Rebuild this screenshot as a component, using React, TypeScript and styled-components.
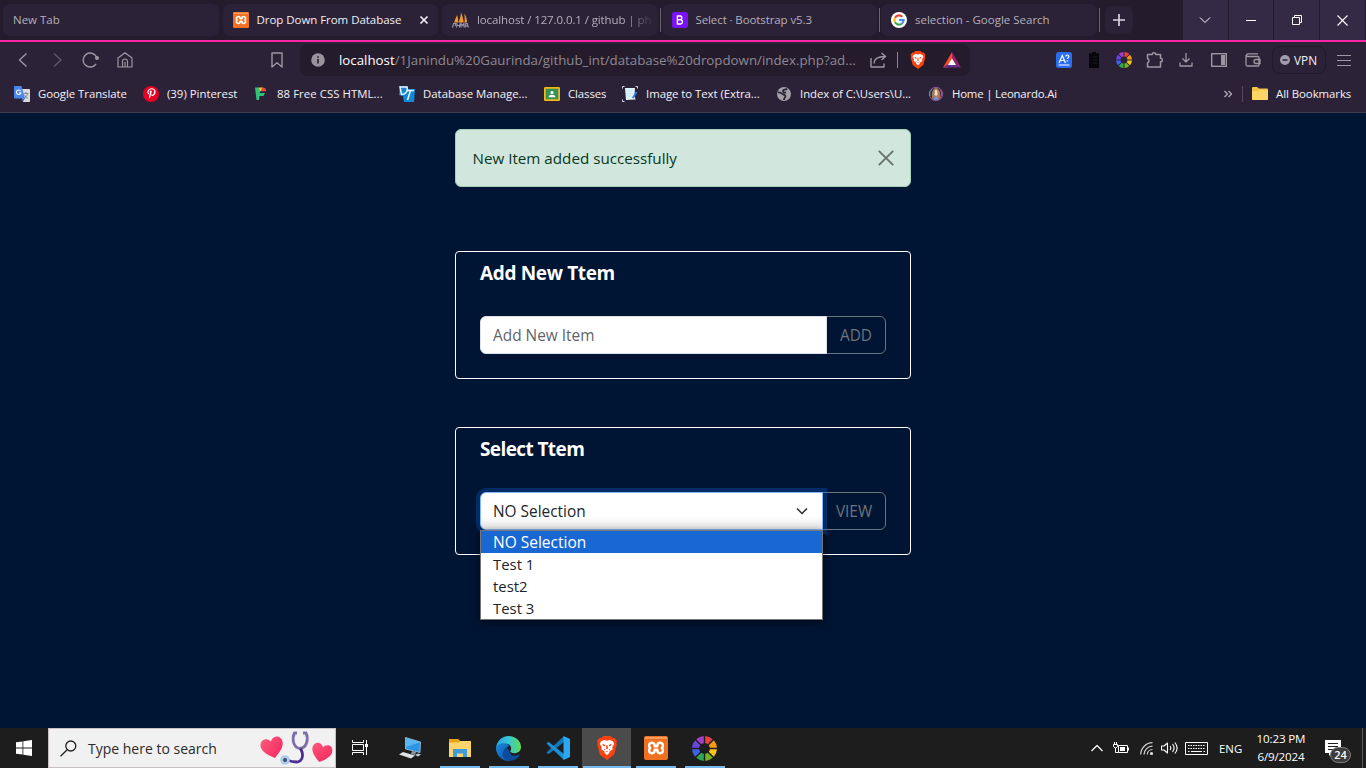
import React from "react";
import styled, { createGlobalStyle } from "styled-components";
import { FaPinterestP } from "react-icons/fa";

const Global = createGlobalStyle`
  * { box-sizing: border-box; }
  body {
    margin: 0;
    overflow: hidden;
    font-family: "Open Sans", "Noto Sans", sans-serif;
    background: #001433;
  }
  svg { display: block; flex: none; }
`;

const Screen = styled.div`
  width: 1366px;
  height: 768px;
  display: flex;
  flex-direction: column;
`;

/* ---------- browser chrome ---------- */

const TabStrip = styled.header`
  height: 42px;
  display: flex;
  background: #241b2c;
  border-bottom: 2px solid #fb26a7;
`;
const Tabs = styled.div`
  display: flex;
  width: 1098px;
  padding: 4px 0 4px 3px;
`;
const TabSlot = styled.div<{ $rule?: boolean }>`
  width: 219.5px;
  flex: none;
  display: flex;
  align-items: center;
  &::after {
    content: "";
    width: 1px;
    height: 24px;
    margin-left: 2px;
    background: ${(p) => (p.$rule ? "#6a6370" : "transparent")};
  }
`;
const Tab = styled.div<{ $active?: boolean }>`
  width: 215.5px;
  height: 32px;
  padding: 0 8px 1px 10px;
  display: flex;
  align-items: center;
  gap: 8px;
  border-radius: 7px;
  background: #2c2238;
  color: ${(p) => (p.$active ? "#f1eff4" : "#b4afba")};
  font-size: 11.5px;
`;
const TabTitle = styled.span<{ $fade?: boolean; $ls?: number }>`
  flex: 1;
  white-space: nowrap;
  letter-spacing: ${(p) => p.$ls ?? 0}px;
  ${(p) => p.$fade && "mask-image: linear-gradient(90deg, #000 84%, transparent 102%);"}
`;
const NewTab = styled.div`
  width: 28px;
  height: 28px;
  margin: 6px 50px 0 7px;
  border-radius: 7px;
  background: #2c2238;
  display: grid;
  place-items: center;
`;
const WinButton = styled.div`
  width: 45px;
  height: 40px;
  margin-right: 1px;
  background: #352a46;
  display: grid;
  place-items: center;
`;

const Toolbar = styled.div`
  height: 34px;
  display: flex;
  align-items: center;
  background: #2c2238;
  color: #9c96a1;
`;
const NavIcons = styled.div`
  width: 300px;
  display: flex;
  align-items: center;
  padding: 2px 0 0 15px;
`;
const Slot = styled.div<{ $w: number; $dim?: boolean }>`
  width: ${(p) => p.$w}px;
  flex: none;
  display: flex;
  opacity: ${(p) => (p.$dim ? 0.45 : 1)};
`;
const Address = styled.div`
  width: 670px;
  height: 32px;
  margin-top: 2px;
  padding: 0 9px 0 10px;
  display: flex;
  align-items: center;
  border-radius: 8px;
  background: #241b2c;
`;
const Url = styled.div`
  width: 531px;
  margin-left: 13px;
  white-space: nowrap;
  font-size: 13.3px;
  color: #8e8893;
  b { font-weight: 400; color: #fff; }
`;
const Rule = styled.i<{ $h: number; $m: string; $c?: string }>`
  width: 1px;
  height: ${(p) => p.$h}px;
  margin: ${(p) => p.$m};
  background: ${(p) => p.$c ?? "#8b8590"};
`;
const Extensions = styled.div`
  display: flex;
  align-items: center;
  padding: 2px 0 0 86px;
`;
const Vpn = styled.div`
  width: 54px;
  height: 28px;
  display: flex;
  align-items: center;
  gap: 4px;
  padding: 0 0 1px 7px;
  border: 1px solid #211829;
  border-radius: 8px;
  color: #f3f1f5;
  font-size: 11.8px;
`;

const BookmarkBar = styled.nav`
  height: 37px;
  display: flex;
  align-items: center;
  padding: 0 0 1px 14px;
  border-bottom: 1px solid #463c50;
  background: #2c2238;
  color: #f4f2f6;
  font-size: 11.4px;
`;
const Bookmark = styled.div<{ $w: number; $ls?: number }>`
  width: ${(p) => p.$w}px;
  flex: none;
  display: flex;
  align-items: center;
  gap: 8px;
  white-space: nowrap;
  letter-spacing: ${(p) => p.$ls ?? 0}px;
`;

/* ---------- page ---------- */

const Page = styled.main`
  height: 615px;
  background: #001433;
  padding-top: 16px;
  display: flex;
  flex-direction: column;
  align-items: center;
`;
const Alert = styled.div`
  width: 456px;
  height: 58px;
  padding: 0 16px 0 16.5px;
  display: flex;
  align-items: center;
  justify-content: space-between;
  border: 1px solid #a3cfbb;
  border-radius: 6px;
  background: #d1e7dd;
  color: #0a3622;
  font-size: 15.2px;
`;
const Card = styled.section<{ $mt: number }>`
  width: 456px;
  height: 128px;
  margin-top: ${(p) => p.$mt}px;
  padding: 9px 24px 0;
  border: 1px solid #fff;
  border-radius: 4px;
`;
const CardTitle = styled.h5<{ $ls: number }>`
  margin: 0 0 31px;
  font-size: 19px;
  line-height: 24px;
  font-weight: 700;
  letter-spacing: ${(p) => p.$ls}px;
  color: #fff;
`;
const Group = styled.div`
  position: relative;
  display: flex;
  height: 38px;
`;
const Field = styled.div<{ $focus?: boolean }>`
  position: relative;
  z-index: 1;
  flex: 1;
  display: flex;
  align-items: center;
  justify-content: space-between;
  padding: 0 12px;
  font-size: 15.4px;
  background: #fff;
  border: 1px solid ${(p) => (p.$focus ? "#86b7fe" : "#dee2e6")};
  border-radius: 6px 0 0 6px;
  color: ${(p) => (p.$focus ? "#212529" : "#5f6469")};
  ${(p) =>
    p.$focus &&
    "box-shadow: 0 0 0 4px rgba(13,110,253,.25); background: linear-gradient(#fff 65%, #e6e6e6);"}
`;
const OutlineButton = styled.button<{ $w: number }>`
  width: ${(p) => p.$w}px;
  margin-left: -1px;
  padding: 0;
  background: transparent;
  border: 1px solid #6c757d;
  border-radius: 0 6px 6px 0;
  font: 15.4px "Open Sans", sans-serif;
  color: #6c757d;
`;
const Options = styled.div`
  position: absolute;
  z-index: 2;
  left: 0;
  top: 38px;
  width: 343px;
  border: 1px solid #767676;
  background: #fff;
  box-shadow: 0 2px 8px rgba(0, 0, 0, 0.55);
`;
const Option = styled.div<{ $on?: boolean }>`
  height: 22px;
  padding-left: 12px;
  line-height: 22px;
  font-size: ${(p) => (p.$on ? 15.5 : 14.9)}px;
  background: ${(p) => (p.$on ? "#1967d2" : "#fff")};
  color: ${(p) => (p.$on ? "#fff" : "#212529")};
`;

/* ---------- taskbar ---------- */

const Taskbar = styled.footer`
  height: 40px;
  display: flex;
  background: #1d1d1d;
  color: #fff;
`;
const Start = styled.div`
  width: 48px;
  padding: 12px 0 0 16px;
`;
const Search = styled.div`
  width: 288px;
  height: 40px;
  display: flex;
  align-items: center;
  padding-left: 11px;
  border: 1px solid #c6bfc2;
  background: #f2f1f1;
  color: #2b2b2b;
  font-size: 14px;
`;
const SearchText = styled.span`
  width: 172px;
  margin-left: 11px;
`;
const TaskButton = styled.div<{ $w?: number; $open?: boolean; $active?: boolean }>`
  width: ${(p) => p.$w ?? 49}px;
  flex: none;
  display: flex;
  flex-direction: column;
  align-items: center;
  justify-content: space-between;
  padding-top: 8px;
  &::after {
    content: "";
    width: ${(p) => (p.$active ? 48 : 40)}px;
    height: 2px;
    background: ${(p) => (p.$open ? "#76b9ed" : "transparent")};
  }
  ${(p) => p.$active && "background: #4b4b4b;"}
`;
const Tray = styled.div`
  margin-left: auto;
  width: 276px;
  display: flex;
  align-items: center;
  font-size: 11.4px;
`;
const Clock = styled.div`
  width: 50px;
  margin-left: -1px;
  text-align: center;
  line-height: 18px;
  font-size: 11.6px;
  white-space: nowrap;
  letter-spacing: -0.15px;
`;
const Notice = styled.div`
  position: relative;
  width: 32px;
  margin-left: 19px;
`;
const Count = styled.span`
  position: absolute;
  left: 5px;
  top: 7px;
  width: 21px;
  height: 16px;
  border: 1px solid #7d7d7d;
  border-radius: 8px;
  background: #3c3c3c;
  font-size: 11px;
  font-weight: 600;
  line-height: 14px;
  text-align: center;
`;

/* ---------- icons ---------- */

const XamppMark = ({ size }: { size: number }) => (
  <svg width={size} height={size} viewBox="0 0 24 24">
    <rect width="24" height="24" rx="2" fill="#f07022" />
    <rect x="1" y="1" width="22" height="1.800" fill="#f9a266" />
    <path
      d="M8.200 6.800C5 6.800 4 10 6.200 12 4 14 5 17.200 8.200 17.200c2 0 2.500-1.600 2.500-3.400h2.600c0 1.800.5 3.400 2.500 3.400 3.200 0 4.200-3.200 2-5.200 2.200-2 1.200-5.200-2-5.200-2 0-2.500 1.600-2.500 3.400h-2.600c0-1.800-.5-3.400-2.500-3.400z"
      fill="none"
      stroke="#fff"
      strokeWidth="2.400"
      strokeLinejoin="round"
    />
  </svg>
);

const BraveMark = ({ w, h }: { w: number; h: number }) => (
  <svg width={w} height={h} viewBox="0 0 20 24">
    <path d="M4.500 2 6.500 0h7l2 2h2.200L20 5l-.7 2 .5 1.500-2.800 10.200L10 24l-7-5.300L.2 8.500.7 7 0 5l2.300-3z" fill="#fb4212" />
    <path d="M10 4.800 7.300 4 4 5.300 2.800 8l2 3.300-.5 2 3.500 2.500L7.500 17l2.500 2 2.500-2-.3-1.200 3.500-2.500-.5-2 2-3.300L16 5.300 12.700 4z" fill="#fff" />
    <path d="m5.400 7.800 3 1.200-.8 1.400-1.700-.8zm9.200 0-3 1.200.8 1.400 1.700-.8zM9.500 9h1l.5 3.500-1 .8-1-.8zM6.600 12.500l1.700 1-.6.800zm6.800 0-1.700 1 .6.800zM9 15.500l1-.5 1 .5-1 .7z" fill="#fb4212" />
  </svg>
);

const wheel = ["#e8403c", "#f59a11", "#f9c21a", "#6fb51f", "#2fa84f", "#3f62ea", "#6a45dd", "#a33ecb"];
const ColorWheel = ({ size }: { size: number }) => (
  <svg width={size} height={size} viewBox="-12 -12 24 24">
    {wheel.map((c, i) => (
      <path
        key={c}
        transform={`rotate(${i * 45 + 22.5})`}
        d="M-3.900 -11.350A12 12 0 0 1 3.900 -11.350L1.400 -5A5.200 5.200 0 0 0 -1.400 -5z"
        fill={c}
      />
    ))}
  </svg>
);

const GoogleG = () => (
  <svg width="16" height="16" viewBox="0 0 16 16">
    <circle cx="8" cy="8" r="8" fill="#fff" />
    <g fill="none" strokeWidth="2.200">
      <path d="M4 5.700A4.600 4.600 0 0 1 11.300 4.800" stroke="#ea4335" />
      <path d="M4 5.700a4.600 4.600 0 0 0 0 4.600" stroke="#fbbc05" />
      <path d="M4 10.300a4.600 4.600 0 0 0 7 1.200" stroke="#34a853" />
      <path d="M8.200 8h4.400a4.600 4.600 0 0 1-1.600 3.500" stroke="#4285f4" />
    </g>
  </svg>
);

const PmaMark = () => (
  <svg width="17" height="16" viewBox="0 0 17 16">
    <path d="M5 3 2 10.500h4.500C6 8 6 5 5 3zM9 .5C9 4 7.500 7 6.800 10.500h5C11 7 10.500 3 9 .5zM12.500 1.500c0 3 .5 6 0 9H15C15 7 14 4 12.500 1.500z" fill="#f29a2e" />
    <path d="M.5 15.500 1.500 11.500h2.500l-1 2.500M4.500 15.500l.7-4M5 13.500h2.500M8 11.500l-.5 4M9 15.500v-4l1.500 2 1.500-2v4M13.200 15.500l.6-4h1.500l1 4M13.500 14h2" fill="none" stroke="#9a97a8" strokeWidth="1.100" />
  </svg>
);

const BootstrapMark = () => (
  <svg width="16" height="16" viewBox="0 0 16 16">
    <rect width="16" height="16" rx="2.500" fill="#7a12f8" />
    <path d="M5.400 4v8h3.200a2.200 2.200 0 0 0 .2-4.300H5.400h3a1.900 1.900 0 0 0 0-3.700z" fill="none" stroke="#fff" strokeWidth="1.400" />
  </svg>
);

const Stroke = ({ w = 16, h = 16, d, sw = 1.2, c = "currentColor" }: { w?: number; h?: number; d: string; sw?: number; c?: string }) => (
  <svg width={w} height={h} viewBox={`0 0 ${w} ${h}`} fill="none" stroke={c} strokeWidth={sw} strokeLinejoin="round">
    <path d={d} />
  </svg>
);

const TranslateMark = () => (
  <svg width="16" height="16" viewBox="0 0 16 16">
    <path d="M6 3h9a1 1 0 0 1 1 1v11a1 1 0 0 1-1 1H9z" fill="#dcdcdc" />
    <path d="M9.500 7.500h5M12 6v1.500M13.500 8c-.5 2-2 3.500-3.500 4.500M10.500 9c.7 1.500 2 2.800 3.500 3.500" stroke="#72808c" strokeWidth=".9" fill="none" />
    <path d="M1 0h6.500L11 12.500H1a1 1 0 0 1-1-1V1a1 1 0 0 1 1-1z" fill="#4a86f0" />
    <path d="M6.700 5A2.300 2.300 0 1 0 7 6.800H4.900" stroke="#fff" strokeWidth="1.100" fill="none" />
    <path d="m8 12.500 3 0-2 3.200z" fill="#3267d6" />
  </svg>
);

const PinterestDisc = styled.span`
  width: 16px;
  height: 16px;
  border-radius: 8px;
  background: #e60023;
  display: grid;
  place-items: center;
`;

const FMark = () => (
  <svg width="16" height="16" viewBox="0 0 16 16">
    <path d="M2 1.500h4l1.500 4-1 1.500H12L10.500 10H6.500L6 14H3.500z" fill="#2fc27b" />
    <path d="M5.500 1.500H10L8.500 5H6.800z" fill="#f4c430" />
    <path d="M9 1.500c3 0 4.500 1.500 4 3.700H8z" fill="#f04a3e" />
  </svg>
);

const DtMark = () => (
  <svg width="16" height="16" viewBox="0 0 16 16">
    <path d="M1 0h8v3h7l-1 13H5L4 10 0 9z" fill="#1389d6" />
    <path d="M1 1h7c1.500 3-1 7.500-5.500 7.500zM8 4.500h7M11.500 4.500 8.500 14" stroke="#e8f5fd" strokeWidth="1.500" fill="none" />
  </svg>
);

const ClassMark = () => (
  <svg width="16" height="14" viewBox="0 0 16 14">
    <rect width="16" height="14" rx="1.300" fill="#f5b912" />
    <rect x="1.700" y="1.700" width="12.600" height="10.600" fill="#38905a" />
    <circle cx="8" cy="5.500" r="1.600" fill="#fff" />
    <path d="M4.500 10.300c0-3.300 7-3.300 7 0z" fill="#fff" />
  </svg>
);

const OcrMark = () => (
  <svg width="16" height="16" viewBox="0 0 16 16">
    <path d="M3 2h10l-.5 8 1 3.500L4 14z" fill="#dff3fb" />
    <path d="M4.500 5h6M4.500 7.500h6M4.500 10h5" stroke="#c4e6f5" />
    <path d="M.5 2.500v-2h2M13.500.5h2v2M.5 13.500v2h2" stroke="#d8d5dc" fill="none" />
    <path d="m14.700 6-4 6" stroke="#2a7de1" strokeWidth="1.800" />
  </svg>
);

const GlobeMark = () => (
  <svg width="16" height="16" viewBox="0 0 16 16">
    <circle cx="8" cy="8" r="7" fill="#a29fa5" />
    <path d="M2 6.500c2.500-.3 3.500.7 4.500 1.500s3 .7 3 2-1.500 2-1.500 4M11 2.500c-1 2-3.500.5-4 2s1 2.200 3 2.200" fill="none" stroke="#2c2238" strokeWidth="1.700" />
  </svg>
);

const LeonardoMark = () => (
  <svg width="16" height="16" viewBox="0 0 16 16">
    <circle cx="8" cy="8" r="6.700" fill="#3a2540" stroke="#8a5ba0" strokeWidth="1" />
    <path d="M2 10a6 6 0 0 1 2-7" stroke="#3aa7b8" fill="none" />
    <path d="M4.500 13c-1.500-4-.5-11 3.500-11s5 7 3.500 11" fill="#a57a55" />
    <path d="M7 4c2-.7 3 1.500 2.500 4.500L8 10.500 6.500 8.500z" fill="#ecdcc6" />
    <path d="M5 13.800 8 10.500l3 3.300" fill="#7d98e8" />
    <path d="M12.500 4c1.500 2.500 1.500 5.500-.5 8" stroke="#c84a70" fill="none" />
  </svg>
);

const Heart = ({ x, y, r, s }: { x: number; y: number; r: number; s: number }) => (
  <path
    transform={`translate(${x} ${y}) rotate(${r}) scale(${s})`}
    d="M0 10C-7 5-11 1-11-4c0-3.500 2.500-6 5.500-6C-3-10-1-8.500 0-6.500 1-8.500 3-10 5.500-10c3 0 5.500 2.500 5.500 6 0 5-4 9-11 14z"
    fill="url(#heart)"
  />
);

const SearchArt = () => (
  <svg width="74" height="38" viewBox="0 0 74 38">
    <defs>
      <linearGradient id="heart" x1="0" y1="0" x2="1" y2="1">
        <stop offset="0" stopColor="#ff5a7c" />
        <stop offset="1" stopColor="#f0245c" />
      </linearGradient>
    </defs>
    <Heart x={12.5} y={19} r={-14} s={1.02} />
    <Heart x={61.5} y={24} r={14} s={0.92} />
    <path d="M37 4h-2.500c-2.500 5-2 14.500 5.500 15.500 7.500-1 8.500-10.500 6-15.500h-3" fill="none" stroke="#7d6fa8" strokeWidth="2.800" />
    <path d="M40.500 19.500c4 7 1.500 13.500-4 13.500-4 0-7-1-10-2" fill="none" stroke="#4c2e91" strokeWidth="2.800" />
    <circle cx="25" cy="31" r="4.800" fill="#aecbea" />
    <circle cx="25" cy="31" r="2" fill="#38516e" />
  </svg>
);

const PcMark = () => (
  <svg width="24" height="24" viewBox="0 0 24 24">
    <path d="m7.500 1.500 15 4.500-.5 10.500L7.500 13z" fill="#2c96e6" stroke="#a8c6dc" strokeWidth=".8" />
    <path d="m8 2 14.300 4.300L8 11z" fill="#5bb5f2" />
    <path d="m14 15 4 1-1 3-4-1z" fill="#8b959d" />
    <path d="m1 18.500 4-2.500 12 3.500-4 3z" fill="#dfe3e6" />
    <path d="m17 19 3-1.500 3 1-3 2z" fill="#c4cace" />
  </svg>
);

const FolderTask = () => (
  <svg width="24" height="24" viewBox="0 0 24 24">
    <path d="M1 3h9.500l1.500 2H23v16H1z" fill="#e8a313" />
    <path d="M1 6.500h9.500L12 5h11v16H1z" fill="#fbd56b" />
    <path d="M5 21v-8h14v8h-4v-3.500H9V21z" fill="#3e9bde" />
  </svg>
);

const EdgeMark = () => (
  <svg width="25" height="25" viewBox="0 0 24 24">
    <defs>
      <linearGradient id="edgeTop" x1="0" y1=".5" x2="1" y2=".5">
        <stop offset="0" stopColor="#22a3e6" />
        <stop offset=".5" stopColor="#36c5d8" />
        <stop offset="1" stopColor="#5fdc52" />
      </linearGradient>
      <linearGradient id="edgeLow" x1="0" y1="0" x2="1" y2="1">
        <stop offset="0" stopColor="#1b8be0" />
        <stop offset="1" stopColor="#0d52a5" />
      </linearGradient>
    </defs>
    <path d="M0 11C0 18.500 5.500 24 12.500 24c4.500 0 8-2 10-5 .5-1-.3-1.500-1-1-2 1-4.500 1.300-6.500.5L9 8z" fill="#0d4c9c" />
    <path d="M0 11.500C.5 18.500 5.500 24 12.500 24 7 23 5 18 7.500 13.500 9 11 11 9.500 13 10.500 12 7.500 9 6 6 6.500 2.500 7 .5 9 0 11.500z" fill="url(#edgeLow)" />
    <path d="M0 11.500C.7 5 5.500 0 12 0c7 0 12 5 12 10.500 0 4-3 6-6.500 6-2.800 0-4.500-1.200-3.500-2.500 2-3.500-1.500-7-6-7C4 7 1 8.800 0 11.500z" fill="url(#edgeTop)" />
  </svg>
);

const CodeMark = () => (
  <svg width="24" height="24" viewBox="0 0 24 24">
    <path d="m.5 16.500 2 1.700L18 6V0z" fill="#1178bd" />
    <path d="M.5 7.500 2.500 5.800 18 18v6z" fill="#1b8fd6" />
    <path d="M17.500 0 24 3v18l-6.500 3z" fill="#2aa8f2" />
  </svg>
);

const InfoMark = () => (
  <svg width="16" height="16" viewBox="0 0 16 16">
    <circle cx="8" cy="8" r="6.800" fill="#99939e" />
    <path d="M8 7v4.500M8 4.300v1.500" stroke="#241b2c" strokeWidth="1.600" />
  </svg>
);

const BatTriangle = () => (
  <svg width="18" height="16" viewBox="0 0 18 16">
    <path d="M9 0 0 15.500h4.500L9 7.500z" fill="#ff4724" />
    <path d="m9 0 9 15.500-4.500-2.500L9 6.500z" fill="#9e1f63" />
    <path d="M0 15.500h18L13.500 12.500h-9z" fill="#662d91" />
    <path d="m9 6.300 4 6.700H5z" fill="#fff" />
  </svg>
);

export default function App() {
  return (
    <Screen>
      <Global />
      <TabStrip>
        <Tabs>
          <TabSlot>
            <Tab><TabTitle>New Tab</TabTitle></Tab>
          </TabSlot>
          <TabSlot>
            <Tab $active>
              <XamppMark size={16} />
              <TabTitle $ls={-0.05}>Drop Down From Database</TabTitle>
              <Stroke w={12} h={12} d="m2.500 2.500 7 7m0-7-7 7" sw={1.7} />
            </Tab>
          </TabSlot>
          <TabSlot $rule>
            <Tab>
              <PmaMark />
              <TabTitle $fade $ls={-0.1}>localhost / 127.0.0.1 / github | ph</TabTitle>
            </Tab>
          </TabSlot>
          <TabSlot $rule>
            <Tab><BootstrapMark /><TabTitle $ls={-0.1}>Select · Bootstrap v5.3</TabTitle></Tab>
          </TabSlot>
          <TabSlot $rule>
            <Tab><GoogleG /><TabTitle>selection - Google Search</TabTitle></Tab>
          </TabSlot>
        </Tabs>
        <NewTab><Stroke w={12} h={12} d="M6 0v12M0 6h12" sw={1.7} c="#d8d5dc" /></NewTab>
        <WinButton><Stroke w={12} h={8} d="m1 1.500 5 5 5-5" c="#fff" sw={1} /></WinButton>
        <WinButton><Stroke w={10} h={2} d="M0 1.500h10" c="#fff" sw={1} /></WinButton>
        <WinButton><Stroke w={10} h={10} d="M.5 2.500h7v7h-7zM2.500 2.500v-2h7v7h-2" c="#fff" sw={1} /></WinButton>
        <WinButton><Stroke w={11} h={11} d="m.5.500 10 10m0-10-10 10" c="#fff" sw={1.1} /></WinButton>
      </TabStrip>

      <Toolbar>
        <NavIcons>
          <Slot $w={34}><Stroke d="m11.500 1.500-7 6.500 7 6.500" sw={1.4} /></Slot>
          <Slot $w={33} $dim><Stroke d="m5 1.500 7 6.500-7 6.500" sw={1.4} /></Slot>
          <Slot $w={35}>
            <svg width="18" height="16" viewBox="0 0 18 16">
              <path d="M14.500 5A7 7 0 1 0 14 12" fill="none" stroke="currentColor" strokeWidth="1.400" />
              <circle cx="15" cy="6" r="2" fill="currentColor" />
            </svg>
          </Slot>
          <Slot $w={153}><Stroke d="M1 6 8 .8 15 6v9H1zM5.500 15V9.500a2.500 2.500 0 0 1 5 0V15M8 15v-5" sw={1.2} /></Slot>
          <Stroke w={14} h={16} d="M2 1h10v14L7 10.800 2 15z" sw={1.4} />
        </NavIcons>
        <Address>
          <InfoMark />
          <Url><b>localhost</b>/1Janindu%20Gaurinda/github_int/database%20dropdown/index.php?ad...</Url>
          <Stroke w={17} h={16} d="M1 6v9h13v-3.500M4 11.500c0-4.500 3-7 11-7M11.500 1 15.500 4.500 11.500 8" sw={1.4} />
          <Rule $h={16} $m="0 12px 0 10px" />
          <BraveMark w={16} h={18} />
          <Rule $h={0} $m="0 8px" />
          <BatTriangle />
        </Address>
        <Extensions>
          <Slot $w={32}>
            <svg width="16" height="16" viewBox="0 0 16 16">
              <rect width="16" height="16" rx="2.500" fill="#2a6cf0" />
              <path d="m3 11 3.300-7.500L9.500 11M4.200 8.500h4.200M9.800 4.500c0-2 3-2 3 0 0 1.200-1.400 1.300-1.400 2.500M11.400 8.200v1.200M2.500 13h11" fill="none" stroke="#fff" strokeWidth="1.200" />
            </svg>
          </Slot>
          <Slot $w={28}>
            <svg width="12" height="16" viewBox="0 0 12 16">
              <path d="M1 1.500h10V16H1z" fill="#07050a" />
              <path d="M4 0h4v2H4z" fill="#07050a" />
              <path d="M2.500 5h1M5 5h4.500M2.500 8h1M5 8h4.500M2.500 11h1M5 11h4.500" stroke="#2c2238" strokeWidth=".7" />
            </svg>
          </Slot>
          <Slot $w={30}><ColorWheel size={16} /></Slot>
          <Slot $w={33}><Stroke w={18} h={18} d="M1.500 3.500h4.700a1.800 1.800 0 0 1 3.600 0h4.700v3.700a1.800 1.800 0 0 1 0 3.600V16h-13v-4a2.500 2.500 0 0 0 0-4.500z" sw={1.5} /></Slot>
          <Slot $w={32}><Stroke w={14} h={14} d="M7 0v9M3.500 5.500 7 9l3.500-3.500M1 9.500V13h12V9.500" sw={1.3} /></Slot>
          <Slot $w={34}>
            <svg width="16" height="14" viewBox="0 0 16 14">
              <rect x=".7" y=".7" width="14.600" height="12.600" fill="none" stroke="currentColor" strokeWidth="1.400" />
              <rect x="10" y="2" width="4" height="10" fill="currentColor" />
            </svg>
          </Slot>
          <Slot $w={27}><Stroke w={16} h={14} d="M1 2v9.500A1.500 1.500 0 0 0 2.500 13H13a1 1 0 0 0 1-1V4.500a1 1 0 0 0-1-1H2.500A1.500 1.500 0 0 1 2.500.800H13M15 6.500h-4a2 2 0 0 0 0 4h4z" sw={1.3} /></Slot>
          <Vpn>
            <svg width="10" height="10" viewBox="0 0 10 10">
              <circle cx="5" cy="5" r="5" fill="#a19bae" />
              <path d="M2.500 5h5" stroke="#2c2238" strokeWidth="1.500" />
            </svg>
            VPN
          </Vpn>
          <Slot $w={26}><Stroke w={26} h={12} d="M11 1.500h14M11 6.500h14M11 11.500h14" sw={1.1} /></Slot>
        </Extensions>
      </Toolbar>

      <BookmarkBar>
        <Bookmark $w={129} $ls={-0.05}><TranslateMark />Google Translate</Bookmark>
        <Bookmark $w={110}><PinterestDisc><FaPinterestP size={11} color="#fff" /></PinterestDisc>(39) Pinterest</Bookmark>
        <Bookmark $w={146} $ls={0.05}><FMark />88 Free CSS HTML...</Bookmark>
        <Bookmark $w={145}><DtMark />Database Manage...</Bookmark>
        <Bookmark $w={78} $ls={-0.1}><ClassMark />Classes</Bookmark>
        <Bookmark $w={154} $ls={-0.05}><OcrMark />Image to Text (Extra...</Bookmark>
        <Bookmark $w={152} $ls={-0.05}><GlobeMark />Index of C:\Users\U...</Bookmark>
        <Bookmark $w={296} $ls={-0.2}><LeonardoMark />Home | Leonardo.Ai</Bookmark>
        <Stroke w={8} h={8} d="m.500 1 3 3-3 3M4.500 1l3 3-3 3" sw={1.2} c="#b4afba" />
        <Rule $h={16} $m="0 9px 0 10px" $c="#56495f" />
        <Bookmark $w={110} $ls={-0.05}>
          <svg width="16" height="13" viewBox="0 0 16 13">
            <path d="M0 1a1 1 0 0 1 1-1h4l2 1.500h8a1 1 0 0 1 1 1V12a1 1 0 0 1-1 1H1a1 1 0 0 1-1-1z" fill="#f3c24a" />
            <path d="M0 4h6l1.500-1.300H16V12a1 1 0 0 1-1 1H1a1 1 0 0 1-1-1z" fill="#fcd566" />
          </svg>
          All Bookmarks
        </Bookmark>
      </BookmarkBar>

      <Page>
        <Alert>
          New Item added successfully
          <Stroke w={16} h={16} d="m.800.800 14.400 14.400m0-14.400L.800 15.200" sw={1.9} c="#68736e" />
        </Alert>
        <Card $mt={64}>
          <CardTitle $ls={-0.35}>Add New Ttem</CardTitle>
          <Group>
            <Field>Add New Item</Field>
            <OutlineButton $w={60}>ADD</OutlineButton>
          </Group>
        </Card>
        <Card $mt={48}>
          <CardTitle $ls={-0.6}>Select Ttem</CardTitle>
          <Group>
            <Field $focus>
              NO Selection
              <Stroke w={16} h={16} d="m3 5.500 5 5 5-5" sw={1.7} c="#343a40" />
            </Field>
            <OutlineButton $w={64}>VIEW</OutlineButton>
            <Options>
              <Option $on>NO Selection</Option>
              <Option>Test 1</Option>
              <Option>test2</Option>
              <Option>Test 3</Option>
            </Options>
          </Group>
        </Card>
      </Page>

      <Taskbar>
        <Start>
          <svg width="16" height="16" viewBox="0 0 16 16" fill="#fff">
            <path d="M0 2.300 6.500 1.400v6.200H0zM7.300 1.300 16 0v7.600H7.300zM0 8.400h6.500v6.200L0 13.700zM7.300 8.400H16V16l-8.700-1.300z" />
          </svg>
        </Start>
        <Search>
          <svg width="17" height="17" viewBox="0 0 17 17" fill="none" stroke="#222" strokeWidth="1.300">
            <circle cx="10.800" cy="6" r="5" />
            <path d="M7.200 9.700.5 16.300" />
          </svg>
          <SearchText>Type here to search</SearchText>
          <SearchArt />
        </Search>
        <TaskButton $w={49}>
          <svg width="17" height="24" viewBox="0 0 17 24" fill="none" stroke="#fff">
            <path d="M.5 4v2.500h11V4M.5 19v-2.500h11V19M.5 8.500h11v6H.5zM14.500 4v15" />
            <path d="M13 8h3v3h-3z" fill="#fff" stroke="none" />
          </svg>
        </TaskButton>
        <TaskButton $w={50}><PcMark /></TaskButton>
        <TaskButton $open><FolderTask /></TaskButton>
        <TaskButton $open><EdgeMark /></TaskButton>
        <TaskButton $open><CodeMark /></TaskButton>
        <TaskButton $open $active><BraveMark w={20} h={24} /></TaskButton>
        <TaskButton $open><XamppMark size={24} /></TaskButton>
        <TaskButton $open><ColorWheel size={25} /></TaskButton>
        <Tray>
          <Slot $w={23}><Stroke w={14} h={8} d="m1.500 7 5.500-5.500L12.500 7" c="#fff" /></Slot>
          <Slot $w={27}>
            <svg width="16" height="12" viewBox="0 0 16 12" fill="none" stroke="#fff">
              <path d="M5.500 3.500h9v7h-9z" />
              <path d="M7 5h5v4H7zM15 5.500h1v3h-1z" fill="#fff" stroke="none" />
              <path d="M.5 2.500h4v2L3 6H2L.5 4.500zM1.500 0v2M3.500 0v2M2.500 6v4.500h3" />
            </svg>
          </Slot>
          <Slot $w={21}>
            <svg width="13" height="13" viewBox="0 0 13 13" fill="none" stroke="#d0d0d0" strokeWidth="1.200">
              <path d="M.7 12.500A12 12 0 0 1 12.500.700M4 12.500a8.500 8.500 0 0 1 8.500-8.300M7.300 12.500a5.200 5.200 0 0 1 5.200-5" />
              <circle cx="11.500" cy="11.500" r="1" fill="#fff" />
            </svg>
          </Slot>
          <Slot $w={24}><Stroke w={17} h={14} d="M.5 5h2.500l3.500-3v10L3 9H.5zM9 5c1 1.200 1 2.800 0 4M11.500 3c2 2.500 2 5.500 0 8M13.800 1.500c3 3.500 3 7.500 0 11" c="#fff" sw={1.1} /></Slot>
          <Slot $w={34}>
            <svg width="23" height="13" viewBox="0 0 23 13" fill="none" stroke="#fff">
              <path d="M.5.500h22v12H.5z" />
              <path d="M3 3.500h17M3 6.500h17" strokeDasharray="1.500 1" />
              <path d="M3 9.500h1.500M6 9.500h11M18.500 9.500H20" />
            </svg>
          </Slot>
          <Slot $w={38}>ENG</Slot>
          <Clock>10:23 PM<br />6/9/2024</Clock>
          <Notice>
            <svg width="16" height="16" viewBox="0 0 16 16">
              <path d="M0 0h16v13H7l-3 3v-3H0z" fill="#fff" />
              <path d="M3 3.500h10M3 6.500h10M3 9.500h6" stroke="#1d1d1d" />
            </svg>
            <Count>24</Count>
          </Notice>
          <Rule $h={40} $m="0 0 0 5px" $c="#5b5b5b" />
        </Tray>
      </Taskbar>
    </Screen>
  );
}
